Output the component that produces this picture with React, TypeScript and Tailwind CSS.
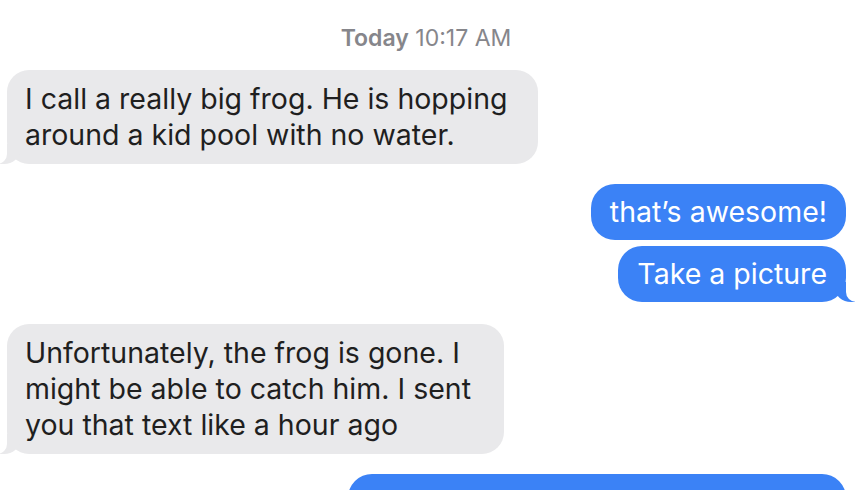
const GRAY = "bg-[#e9e9eb]";

function Received({ lines, className = "" }: { lines: string[]; className?: string }) {
  return (
    <div className={`relative ml-[7px] rounded-[22px] ${GRAY} px-[18px] py-[11px] text-[#1f1f1f] ${className}`}>
      {lines.map((line, i) => (
        <div key={i} className="whitespace-nowrap">
          {line}
        </div>
      ))}
      <div className={`absolute bottom-0 left-[-7px] h-5 w-5 rounded-br-[16px_14px] ${GRAY}`} />
      <div className="absolute bottom-0 left-[-26px] h-5 w-[26px] rounded-br-[10px] bg-white" />
    </div>
  );
}

function Sent({ text, tail = false, className = "w-fit" }: { text: string; tail?: boolean; className?: string }) {
  return (
    <div className={`relative mr-[18px] ml-auto overflow-visible rounded-[24px] bg-[#3b82f6] px-[19px] py-[10px] whitespace-nowrap text-white ${className}`}>
      {text}
      {tail ? (
        <>
          <div className="absolute right-[-9px] bottom-0 h-5 w-5 rounded-bl-[16px_14px] bg-[#3b82f6]" />
          <div className="absolute right-[-28px] bottom-0 h-5 w-[28px] rounded-bl-[10px] bg-white" />
        </>
      ) : null}
    </div>
  );
}

export default function App() {
  return (
    <div
      className="flex h-[490px] w-[864px] flex-col overflow-hidden bg-white text-[28.5px] leading-[36px]"
      style={{ fontFamily: "Inter, 'Noto Sans', sans-serif" }}
    >
      <div className="mt-[24px] pr-[12px] text-center text-[23px] leading-[28px] text-[#86868b]">
        <span className="font-semibold">Today</span> 10:17 AM
      </div>

      <Received className="mt-[18px] w-[531px]" lines={["I call a really big frog. He is hopping", "around a kid pool with no water."]} />

      <Sent className="mt-[20px] w-fit" text="that’s awesome!" />
      <Sent className="mt-[6px] w-fit" text="Take a picture" tail />

      <Received
        className="mt-[22px] w-[497px]"
        lines={["Unfortunately, the frog is gone. I", "might be able to catch him. I sent", "you that text like a hour ago"]}
      />

      <Sent className="mt-[20px] w-[498px] overflow-hidden" text="I would like to see him later" tail />
    </div>
  );
}
